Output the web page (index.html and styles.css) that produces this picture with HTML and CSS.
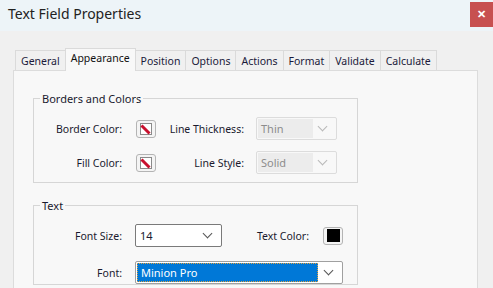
FILE: index.html
```html
<!DOCTYPE html>
<html lang="en">
<head>
  <meta charset="UTF-8" />
  <title>Text Field Properties</title>
  <link rel="stylesheet" href="styles.css">
</head>
<body>

  <div class="title-bar">
    <span class="title">Text Field Properties</span>
    <button class="close-btn">&#x2715;</button>
  </div>

  <div class="dialog">
    <div class="tabs">
      <div class="tab">General</div>
      <div class="tab active">Appearance</div>
      <div class="tab">Position</div>
      <div class="tab">Options</div>
      <div class="tab">Actions</div>
      <div class="tab">Format</div>
      <div class="tab">Validate</div>
      <div class="tab">Calculate</div>
    </div>

    <div class="panel">
      <fieldset class="group">
        <legend>Borders and Colors</legend>
        <div class="grid borders">
          <label>Border Color:</label>
          <div class="swatch"><svg width="12" height="12" viewBox="0 0 12 12"><rect x="0.5" y="0.5" width="11" height="11" fill="#fff" stroke="#8a8a8a"/><path d="M1.5 2.5 L9.5 10.5" stroke="#c8102e" stroke-width="3"/></svg></div>
          <label>Line Thickness:</label>
          <div class="select disabled"><span class="value">Thin</span><span class="chev"></span></div>

          <label>Fill Color:</label>
          <div class="swatch"><svg width="12" height="12" viewBox="0 0 12 12"><rect x="0.5" y="0.5" width="11" height="11" fill="#fff" stroke="#8a8a8a"/><path d="M1.5 2.5 L9.5 10.5" stroke="#c8102e" stroke-width="3"/></svg></div>
          <label>Line Style:</label>
          <div class="select disabled"><span class="value">Solid</span><span class="chev"></span></div>
        </div>
      </fieldset>

      <fieldset class="group text-group">
        <legend>Text</legend>
        <div class="grid text">
          <label>Font Size:</label>
          <div class="select"><span class="value">14</span><span class="chev"></span></div>
          <label>Text Color:</label>
          <div class="swatch"><span class="black"></span></div>

          <label>Font:</label>
          <div class="select wide"><span class="value selected">Minion Pro</span><span class="chev"></span></div>
        </div>
      </fieldset>
    </div>
  </div>

</body>
</html>
```

FILE: styles.css
```css
* {
  box-sizing: border-box;
}

body {
  font-family: "Noto Sans", "Open Sans", sans-serif;
  font-size: 10.5px;
  color: #1a1a2e;
  margin: 0;
  background: #f0f0f0;
  overflow: hidden;
}

.title-bar {
  display: flex;
  align-items: flex-start;
  justify-content: space-between;
  height: 31px;
  background: #edf4f8;
}

.title {
  font-size: 14px;
  padding: 4px 0 0 8px;
  color: #222;
}

.close-btn {
  width: 23px;
  height: 25px;
  margin-top: 2px;
  border: none;
  background: #c75050;
  color: #fff;
  font-size: 11px;
  font-weight: bold;
  padding: 0;
}

.dialog {
  padding: 17px 15px 0 13px;
}

.tabs {
  display: flex;
  align-items: flex-end;
  padding-left: 2px;
  height: 22px;
  position: relative;
  z-index: 1;
}

.tab {
  height: 20px;
  padding: 0 5px;
  line-height: 20px;
  background: #f0f0f0;
  border: 1px solid #dadada;
  border-bottom: none;
  margin-right: -1px;
  color: #1a1a3a;
}

.tab.active {
  height: 23px;
  line-height: 18px;
  background: #f8f8f8;
  margin-bottom: -1px;
  padding: 0 5px;
  color: #111;
}

.panel {
  background: #f8f8f8;
  border: 1px solid #dcdcdc;
  height: 230px;
  padding: 20px 0 0 19px;
}

.group {
  width: 325px;
  margin: 0;
  padding: 0;
  border: 1px solid #d6d6d6;
  border-radius: 0;
}

.group legend {
  padding: 0 2px;
  margin-left: 6px;
  font-size: 11px;
}

.grid {
  display: grid;
  align-items: center;
}

.grid label {
  text-align: right;
}

.borders {
  grid-template-columns: 102px 20px 100px 81px;
  row-gap: 11px;
  padding: 11px 0 8px 0;
}

.borders label:nth-child(4n+1) {
  padding-right: 14px;
}

.borders label:nth-child(4n+3) {
  padding-right: 12px;
}

.text-group {
  margin-top: 15px;
}

.text {
  grid-template-columns: 101px 87px 101px 19px;
  row-gap: 14px;
  padding: 11px 0 0 0;
}

.text label:nth-child(1),
.text label:nth-child(5) {
  padding-right: 13px;
}

.text label:nth-child(3) {
  padding-right: 14px;
}

.swatch {
  width: 20px;
  height: 18px;
  border: 1px solid #b4b4b4;
  border-radius: 3px;
  background: #f4f4f4;
  display: flex;
  align-items: center;
  justify-content: center;
}

.swatch .black {
  width: 13px;
  height: 13px;
  background: #000;
}

.select {
  display: flex;
  align-items: center;
  height: 23px;
  border: 1px solid #7a7a7a;
  border-radius: 2px;
  background: #fff;
  padding: 1px;
  font-size: 11px;
}

.select .value {
  flex: 1;
  padding-left: 3px;
  line-height: 19px;
}

.select .chev {
  width: 22px;
  height: 100%;
  position: relative;
}

.select .chev::after {
  content: "";
  position: absolute;
  left: 6px;
  top: 4px;
  width: 6px;
  height: 6px;
  border-right: 1px solid #555;
  border-bottom: 1px solid #555;
  transform: rotate(45deg);
}

.select.disabled {
  border-color: #dcdcdc;
  background: #f8f8f8;
}

.select.disabled .value {
  background: #ececec;
  color: #8c8c8c;
  height: 19px;
}

.select.disabled .chev::after {
  border-color: #b8b8b8;
}

.select.wide {
  grid-column: 2 / 5;
  width: 208px;
  border-color: #a0a0a0;
}

.select .value.selected {
  background: #0078d7;
  color: #fff;
  height: 19px;
  border: 1px dotted #e0a040;
  line-height: 17px;
  margin-right: 1px;
}
```
